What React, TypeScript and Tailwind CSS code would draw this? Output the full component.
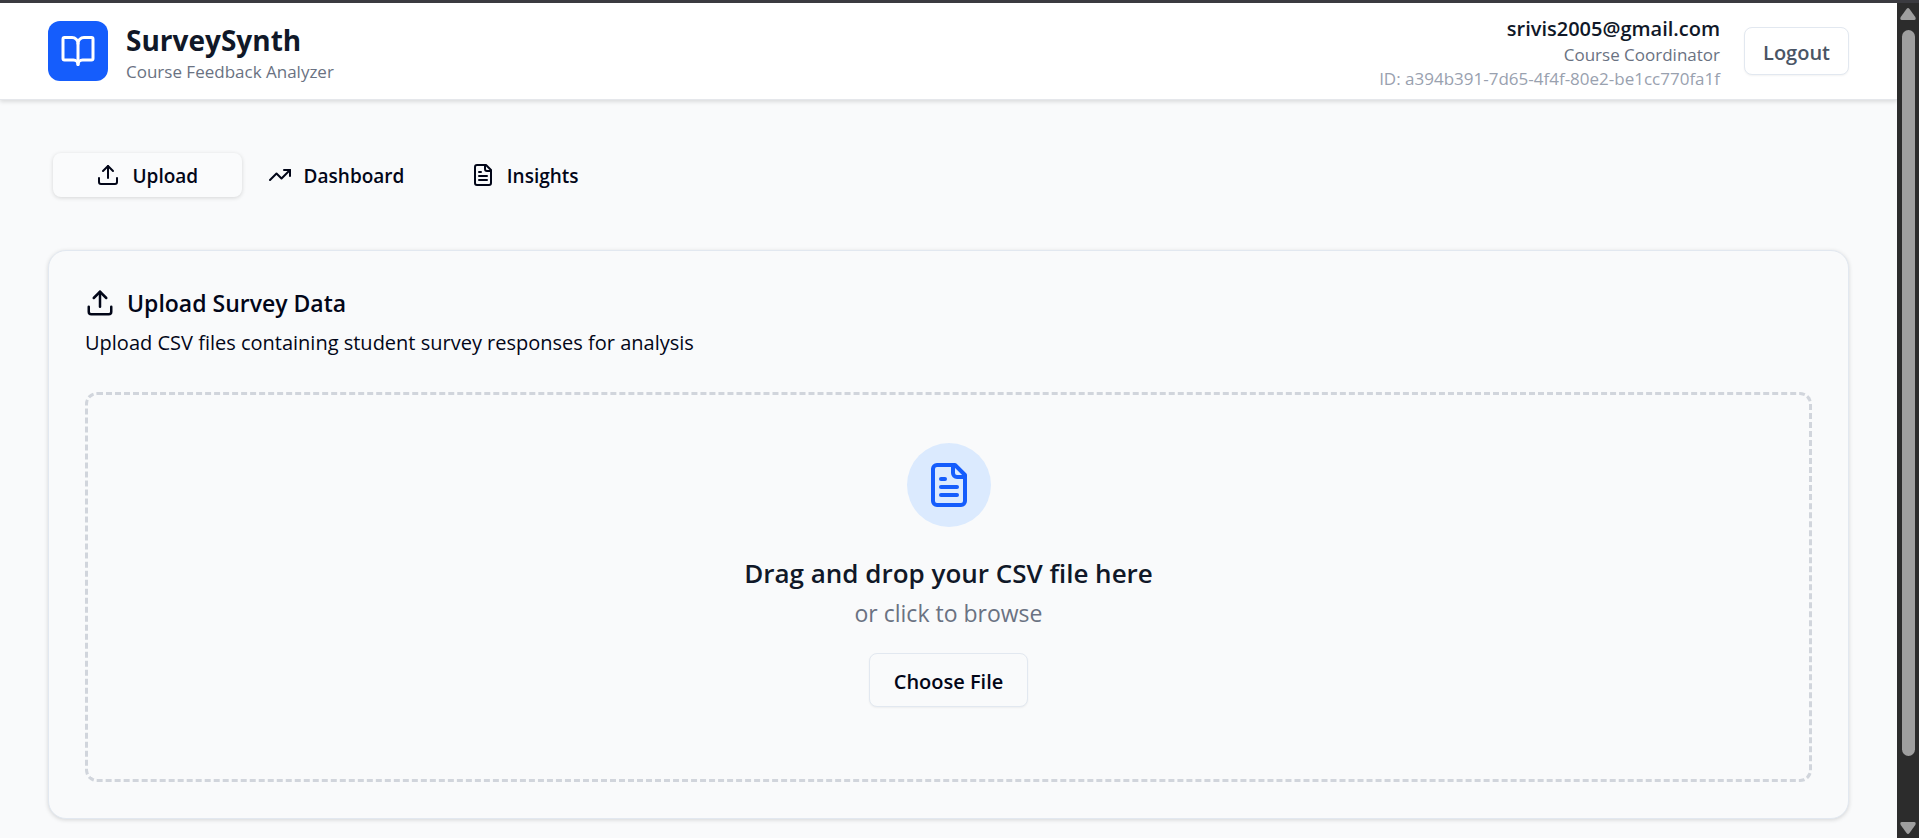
import { useRef, useState } from 'react';
import { BookOpen, TrendingUp } from 'lucide-react';

const tabs = [
    { id: 'upload', label: 'Upload' },
    { id: 'dashboard', label: 'Dashboard' },
    { id: 'insights', label: 'Insights' },
];

function UploadIcon({ className }: { className?: string }) {
    return (
        <svg viewBox="0 0 24 24" fill="none" stroke="currentColor" strokeWidth="2" strokeLinecap="round" strokeLinejoin="round" className={className} aria-hidden="true">
            <path d="M12 3v12" />
            <path d="m17 8-5-5-5 5" />
            <path d="M21 15v4a2 2 0 0 1-2 2H5a2 2 0 0 1-2-2v-4" />
        </svg>
    );
}

function FileIcon({ className }: { className?: string }) {
    return (
        <svg viewBox="0 0 24 24" fill="none" stroke="currentColor" strokeWidth="2" strokeLinecap="round" strokeLinejoin="round" className={className} aria-hidden="true">
            <path d="M15 2H6a2 2 0 0 0-2 2v16a2 2 0 0 0 2 2h12a2 2 0 0 0 2-2V7Z" />
            <path d="M14 2v4a2 2 0 0 0 2 2h4" />
            <path d="M10 9H8" />
            <path d="M16 13H8" />
            <path d="M16 17H8" />
        </svg>
    );
}

function TabIcon({ id }: { id: string }) {
    if (id === 'dashboard') return <TrendingUp className="size-6" />;
    if (id === 'insights') return <FileIcon className="size-6" />;
    return <UploadIcon className="size-6" />;
}

function Header() {
    return (
        <header className="flex items-center justify-between border-b border-gray-200 bg-white px-12 py-2 shadow-[0_2px_4px_rgba(0,0,0,0.12)]">
            <div className="flex items-center gap-[18px]">
                <div className="flex size-[60px] items-center justify-center rounded-xl bg-[#155dfc] text-white">
                    <BookOpen className="size-9" />
                </div>
                <div className="pt-1.5">
                    <h1 className="text-[28px] leading-9 font-bold text-[#101828]">SurveySynth</h1>
                    <p className="text-[17px] leading-7 text-[#6a7282]">Course Feedback Analyzer</p>
                </div>
            </div>
            <div className="flex items-center gap-6">
                <div className="pt-1 text-right">
                    <p className="text-xl leading-7 font-semibold text-[#101828]">srivis2005@gmail.com</p>
                    <p className="text-[17px] leading-6 text-[#6a7282]">Course Coordinator</p>
                    <p className="text-[17px] leading-6 text-[#99a1af]">ID: a394b391-7d65-4f4f-80e2-be1cc770fa1f</p>
                </div>
                <button className="h-12 rounded-lg border border-[#e2e8f0] bg-white px-[18px] pt-[3px] text-xl font-semibold text-[#4a5565] shadow-xs">
                    Logout
                </button>
            </div>
        </header>
    );
}

function Scrollbar() {
    return (
        <div className="flex w-[22px] shrink-0 flex-col items-center bg-[#2c2c2c] pt-[5px] pb-1 text-[#9f9f9f]" aria-hidden="true">
            <svg viewBox="0 0 16 12" className="h-3 w-4" fill="currentColor">
                <path d="M6.500 1Q8-1 9.500 1L15.300 9Q16.500 12 14 12H2Q-.5 12 .7 9Z" />
            </svg>
            <div className="mt-[10px] mb-[66px] w-[13px] flex-1 rounded-full bg-[#9f9f9f]" />
            <svg viewBox="0 0 16 12" className="h-3 w-4" fill="currentColor">
                <path d="M6.500 11Q8 13 9.500 11L15.300 3Q16.500 0 14 0H2Q-.5 0 .7 3Z" />
            </svg>
        </div>
    );
}

export default function App() {
    const [activeTab, setActiveTab] = useState('upload');
    const fileInput = useRef<HTMLInputElement>(null);

    return (
        <div className="flex h-screen flex-col overflow-hidden border-t-[3px] border-[#3b3b40] bg-[#f9fafb] font-['Open_Sans','Noto_Sans',sans-serif] text-[#020618]">
            <div className="flex min-h-0 flex-1">
                <div className="min-w-0 flex-1 overflow-hidden">
                    <Header />
                    <main className="px-12 pt-12">
                        <div role="tablist" className="grid w-[576px] grid-cols-3 p-[5px]">
                            {tabs.map((tab) => (
                                <button
                                    key={tab.id}
                                    role="tab"
                                    aria-selected={activeTab === tab.id}
                                    onClick={() => setActiveTab(tab.id)}
                                    className={`flex h-11 items-center justify-center gap-3 rounded-lg text-[19px] font-semibold ${activeTab === tab.id ? 'bg-[#fafbfc] shadow-[0_1px_4px_rgba(0,0,0,0.15)]' : ''}`}
                                >
                                    <TabIcon id={tab.id} />
                                    <span className="pt-0.5">{tab.label}</span>
                                </button>
                            ))}
                        </div>

                        <section className="mt-12 rounded-[18px] border border-[#e2e8f0] bg-[#f9fafb] p-9 shadow-[0_1px_4px_rgba(0,0,0,0.15)]">
                            <h2 className="flex items-center gap-3 text-[23px] leading-8 font-semibold">
                                <UploadIcon className="size-[30px]" />
                                Upload Survey Data
                            </h2>
                            <p className="mt-2 text-xl leading-8">
                                Upload CSV files containing student survey responses for analysis
                            </p>

                            <div className="mt-[33px] flex flex-col items-center rounded-xl border-3 border-dashed border-[#d1d5dc] pt-12 pb-[72px]">
                                <div className="flex size-[84px] items-center justify-center rounded-full bg-[#dbeafe] text-[#155dfc]">
                                    <FileIcon className="size-12" />
                                </div>
                                <h3 className="mt-[26px] text-[26px] leading-10 font-semibold text-[#101828]">Drag and drop your CSV file here</h3>
                                <p className="text-[23px] leading-10 text-[#6a7282]">or click to browse</p>
                                <input ref={fileInput} type="file" accept=".csv" aria-label="CSV file" className="hidden" />
                                <button
                                    onClick={() => fileInput.current?.click()}
                                    className="mt-5 h-[54px] rounded-lg border border-[#e2e8f0] bg-[#f9fafb] px-6 pt-[3px] text-xl font-semibold shadow-xs"
                                >
                                    Choose File
                                </button>
                            </div>
                        </section>
                    </main>
                </div>
                <Scrollbar />
            </div>
        </div>
    );
}
